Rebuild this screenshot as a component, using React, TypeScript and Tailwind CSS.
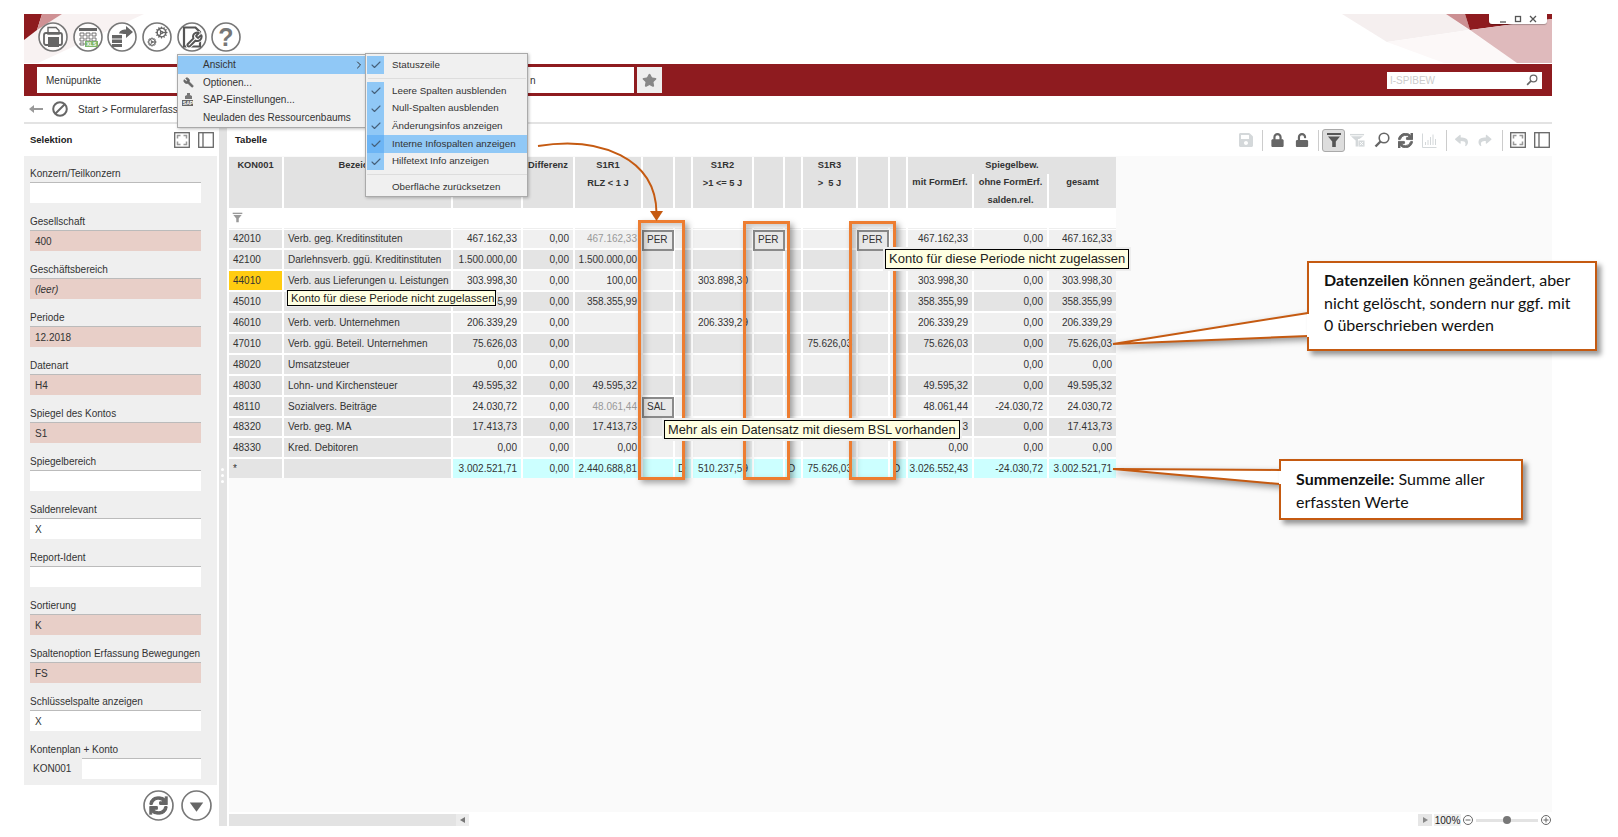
import { Check, ChevronRight, Cog, Star, Wrench } from "lucide-react";
import { FaLock, FaReply, FaSave, FaShare, FaSync, FaUnlock } from "react-icons/fa";
import clsx from "clsx";

type Row = {
  kon: string;
  name: string;
  val: string;
  diff: string;
  r1?: string;
  r2?: string;
  r3?: string;
  mit?: string;
  ohne: string;
  ges: string;
  r1Gray?: boolean;
  info?: string[];
  yellow?: boolean;
};

const ROWS: Row[] = [
  { kon: "42010", name: "Verb. geg. Kreditinstituten", val: "467.162,33", diff: "0,00", r1: "467.162,33", r1Gray: true, mit: "467.162,33", ohne: "0,00", ges: "467.162,33", info: ["PER", "PER", "PER"] },
  { kon: "42100", name: "Darlehnsverb. ggü. Kreditinstituten", val: "1.500.000,00", diff: "0,00", r1: "1.500.000,00", ohne: "", ges: "" },
  { kon: "44010", name: "Verb. aus Lieferungen u. Leistungen", val: "303.998,30", diff: "0,00", r1: "100,00", r2: "303.898,30", mit: "303.998,30", ohne: "0,00", ges: "303.998,30", yellow: true },
  { kon: "45010", name: "", val: "358.355,99", diff: "0,00", r1: "358.355,99", mit: "358.355,99", ohne: "0,00", ges: "358.355,99" },
  { kon: "46010", name: "Verb. verb. Unternehmen", val: "206.339,29", diff: "0,00", r2: "206.339,29", mit: "206.339,29", ohne: "0,00", ges: "206.339,29" },
  { kon: "47010", name: "Verb. ggü. Beteil. Unternehmen", val: "75.626,03", diff: "0,00", r3: "75.626,03", mit: "75.626,03", ohne: "0,00", ges: "75.626,03" },
  { kon: "48020", name: "Umsatzsteuer", val: "0,00", diff: "0,00", ohne: "0,00", ges: "0,00" },
  { kon: "48030", name: "Lohn- und Kirchensteuer", val: "49.595,32", diff: "0,00", r1: "49.595,32", mit: "49.595,32", ohne: "0,00", ges: "49.595,32" },
  { kon: "48110", name: "Sozialvers. Beiträge", val: "24.030,72", diff: "0,00", r1: "48.061,44", r1Gray: true, mit: "48.061,44", ohne: "-24.030,72", ges: "24.030,72", info: ["SAL"] },
  { kon: "48320", name: "Verb. geg. MA", val: "17.413,73", diff: "0,00", r1: "17.413,73", mit: "17.413,73", ohne: "0,00", ges: "17.413,73" },
  { kon: "48330", name: "Kred. Debitoren", val: "0,00", diff: "0,00", r1: "0,00", mit: "0,00", ohne: "0,00", ges: "0,00" },
];

const FIELDS: { label: string; value?: string; required?: boolean; italic?: boolean }[] = [
  { label: "Konzern/Teilkonzern" },
  { label: "Gesellschaft", value: "400", required: true },
  { label: "Geschäftsbereich", value: "(leer)", required: true, italic: true },
  { label: "Periode", value: "12.2018", required: true },
  { label: "Datenart", value: "H4", required: true },
  { label: "Spiegel des Kontos", value: "S1", required: true },
  { label: "Spiegelbereich" },
  { label: "Saldenrelevant", value: "X" },
  { label: "Report-Ident" },
  { label: "Sortierung", value: "K", required: true },
  { label: "Spaltenoption Erfassung Bewegungen", value: "FS", required: true },
  { label: "Schlüsselspalte anzeigen", value: "X" },
];

const GRID_COLS =
  "grid-cols-[53px_167px_68px_50px_66px_30px_16px_59px_29px_16px_53px_30px_16px_64px_73px_67px]";

function CircleIcon({ children, size = 30 }: { children: React.ReactNode; size?: number }) {
  return (
    <svg viewBox="0 0 30 30" width={size} height={size} className="shrink-0 text-[#666]">
      <circle cx="15" cy="15" r="14" fill="#fff" fillOpacity="0.75" stroke="#777" strokeWidth="1.6" />
      {children}
    </svg>
  );
}

function FilterGlyph({ className }: { className?: string }) {
  return (
    <svg viewBox="0 0 16 16" className={className} fill="currentColor">
      <path d="M1 1h14v2H1z" />
      <path d="M2 4.500h12l-4.200 5v5.500H6.200V9.500z" />
    </svg>
  );
}

function FilterClearGlyph() {
  return (
    <svg viewBox="0 0 16 16" className="ml-[5px] h-[15px] w-[15px] shrink-0" fill="#d4d8da">
      <path d="M0 1h15v1.500H0z" />
      <path d="M1 3.500h13l-4 3H8.500v8H6V8z" />
      <rect x="9" y="8" width="6.500" height="6.500" />
      <path d="M10.500 9.500l3.500 3.500M14 9.500L10.500 13" stroke="#fff" strokeWidth="1" />
    </svg>
  );
}

function ExpandIcon() {
  return (
    <svg viewBox="0 0 16 16" className="h-4 w-4 shrink-0" fill="none">
      <rect x="0.700" y="0.700" width="14.600" height="14.600" stroke="#666" strokeWidth="1.300" />
      <path d="M3.500 6.500v-3h3M9.500 3.500h3v3M12.500 9.500v3h-3M6.500 12.500h-3v-3" stroke="#999" strokeWidth="1.500" />
    </svg>
  );
}

function PanelIcon() {
  return (
    <svg viewBox="0 0 16 16" className="h-4 w-4 shrink-0" fill="none">
      <rect x="0.700" y="0.700" width="14.600" height="14.600" stroke="#666" strokeWidth="1.300" />
      <path d="M5 1v14" stroke="#666" strokeWidth="1.300" />
    </svg>
  );
}

function ToolSep({ className }: { className: string }) {
  return <span className={clsx("h-[21px] w-px shrink-0 bg-[#ccc]", className)} />;
}

function Field({ label, value, required, italic }: (typeof FIELDS)[number]) {
  return (
    <div className="mb-[10px]">
      <div className="flex h-[17px] items-center whitespace-nowrap text-[10px] text-[#333]">{label}</div>
      <div
        className={clsx(
          "flex h-[21px] items-center border-t border-[#bbb] pl-[5px] text-[10px] text-[#333]",
          required ? "bg-[#e8cfc8]" : "bg-white",
          italic && "italic",
        )}
      >
        {value}
      </div>
    </div>
  );
}

function Cell({
  children,
  className,
  right,
}: {
  children?: React.ReactNode;
  className: string;
  right?: boolean;
}) {
  return (
    <div
      className={clsx(
        "relative flex h-[18.9px] items-center whitespace-nowrap text-[10px] text-[#333]",
        right ? "justify-end pr-1" : "pl-1",
        className,
      )}
    >
      {children}
    </div>
  );
}

function InfoBox({ text }: { text: string }) {
  return (
    <div className="absolute left-[-1px] top-0 z-10 flex h-[21px] w-[32px] items-center border-2 border-[#8a8a8a] bg-[#e8e8e8] pb-px pl-[3px] text-[10px] text-[#333]">
      {text}
    </div>
  );
}

function HeadCell({ lines, className }: { lines: string[]; className?: string }) {
  return (
    <div
      className={clsx(
        "flex flex-col items-center bg-[#e2e2e2] text-[9.3px] font-bold leading-[17.5px] text-[#333]",
        className ?? "h-[51px]",
      )}
    >
      {lines.map((line) => (
        <span key={line} className="whitespace-pre">
          {line}
        </span>
      ))}
    </div>
  );
}

function Table() {
  return (
    <div className={clsx("grid w-fit gap-[2px] bg-white", GRID_COLS)}>
      <HeadCell lines={["KON001"]} />
      <HeadCell lines={["Bezeichnung"]} />
      <HeadCell lines={[]} />
      <HeadCell lines={["Differenz"]} />
      <HeadCell lines={["S1R1", "RLZ < 1 J"]} />
      <HeadCell lines={[]} />
      <HeadCell lines={[]} />
      <HeadCell lines={["S1R2", ">1 <= 5 J"]} />
      <HeadCell lines={[]} />
      <HeadCell lines={[]} />
      <HeadCell lines={["S1R3", ">  5 J"]} />
      <HeadCell lines={[]} />
      <HeadCell lines={[]} />
      {/* Spiegelbew. spans its three sub columns */}
      <div className="col-span-3 flex h-[51px] flex-col">
        <div className="h-[17px] bg-[#e2e2e2] text-center text-[9.3px] font-bold leading-[17.5px] text-[#333]">
          Spiegelbew.
        </div>
        <div className="grid flex-1 grid-cols-[64px_73px_67px] gap-x-[2px]">
          <HeadCell lines={["mit FormErf."]} className="h-[34px]" />
          <HeadCell lines={["ohne FormErf.", "salden.rel."]} className="h-[34px]" />
          <HeadCell lines={["gesamt"]} className="h-[34px]" />
        </div>
      </div>

      {/* filter row */}
      {Array.from({ length: 16 }, (_, i) => (
        <div key={i} className="h-[17.5px] bg-white shadow-[0_1px_0_#eee]">
          {i === 0 && <FilterGlyph className="ml-[3px] mt-[2px] h-[11px] w-[11px] text-[#999]" />}
        </div>
      ))}

      {ROWS.map((r, idx) => {
        const bg = idx % 2 === 0 ? "bg-[#f0f0f0]" : "bg-[#e4e4e4]";
        return [
          <Cell key={`${r.kon}-k`} className={r.yellow ? "bg-[#ffcc11]" : "bg-[#e4e4e4]"}>{r.kon}</Cell>,
          <Cell key={`${r.kon}-n`} className="bg-[#e4e4e4]">{r.name}</Cell>,
          <Cell key={`${r.kon}-v`} right className={bg}>{r.val}</Cell>,
          <Cell key={`${r.kon}-d`} right className={bg}>{r.diff}</Cell>,
          <Cell key={`${r.kon}-1`} right className={clsx(bg, r.r1Gray && "!text-[#999]")}>{r.r1}</Cell>,
          <Cell key={`${r.kon}-i1`} className={bg}>{r.info?.[0] && <InfoBox text={r.info[0]} />}</Cell>,
          <Cell key={`${r.kon}-s1`} className={bg} />,
          <Cell key={`${r.kon}-2`} right className={bg}>{r.r2}</Cell>,
          <Cell key={`${r.kon}-i2`} className={bg}>{r.info?.[1] && <InfoBox text={r.info[1]} />}</Cell>,
          <Cell key={`${r.kon}-s2`} className={bg} />,
          <Cell key={`${r.kon}-3`} right className={bg}>{r.r3}</Cell>,
          <Cell key={`${r.kon}-i3`} className={bg}>{r.info?.[2] && <InfoBox text={r.info[2]} />}</Cell>,
          <Cell key={`${r.kon}-s3`} className={bg} />,
          <Cell key={`${r.kon}-m`} right className={bg}>{r.mit}</Cell>,
          <Cell key={`${r.kon}-o`} right className={bg}>{r.ohne}</Cell>,
          <Cell key={`${r.kon}-g`} right className={bg}>{r.ges}</Cell>,
        ];
      })}

      {/* Summenzeile */}
      <Cell className="bg-[#e4e4e4]">*</Cell>
      <Cell className="bg-[#e4e4e4]" />
      <Cell right className="bg-[#ccffff]">3.002.521,71</Cell>
      <Cell right className="bg-[#ccffff]">0,00</Cell>
      <Cell right className="bg-[#ccffff]">2.440.688,81</Cell>
      <Cell className="bg-[#ccffff]" />
      <Cell className="bg-[#ccffff] !pl-[3px]">D</Cell>
      <Cell right className="bg-[#ccffff]">510.237,59</Cell>
      <Cell className="bg-[#ccffff]" />
      <Cell className="bg-[#ccffff] !pl-[3px]">D</Cell>
      <Cell right className="bg-[#ccffff]">75.626,03</Cell>
      <Cell className="bg-[#ccffff]" />
      <Cell className="bg-[#ccffff] !pl-[3px]">D</Cell>
      <Cell right className="bg-[#ccffff]">3.026.552,43</Cell>
      <Cell right className="bg-[#ccffff]">-24.030,72</Cell>
      <Cell right className="bg-[#ccffff]">3.002.521,71</Cell>
    </div>
  );
}

function MenuCheck({ dark }: { dark?: boolean }) {
  return (
    <span className={clsx("flex h-[17.7px] w-[17px] shrink-0 items-center justify-center", dark ? "bg-[#6db5f5]" : "bg-[#90c8f6]")}>
      <Check className="h-3 w-3 text-[#46607a]" strokeWidth={2.2} />
    </span>
  );
}

function SubItem({ label, dark }: { label: string; dark?: boolean }) {
  return (
    <div className={clsx("flex h-[17.7px] items-center text-[9.8px] text-[#333]", dark && "bg-[#90c8f6]")}>
      <MenuCheck dark={dark} />
      <span className="ml-2">{label}</span>
    </div>
  );
}

function Menus() {
  return (
    <>
      <div className="absolute left-[177px] top-[54px] z-30 h-[74px] w-[189px] border border-[#aaa] bg-[#f0f0f0] pt-px text-[10px] text-[#333] shadow-[1px_1px_3px_rgba(0,0,0,0.25)]">
        <div className="flex h-[17.500px] items-center bg-[#90c8f6] pl-[25px]">
          Ansicht
          <ChevronRight className="ml-auto h-3 w-3" />
        </div>
        <div className="relative flex h-[17.500px] items-center pl-[25px]">
          <Wrench className="absolute left-[5px] h-[11px] w-[11px] -scale-x-100 fill-[#666] text-[#666]" />
          Optionen...
        </div>
        <div className="relative flex h-[17.500px] items-center pl-[25px]">
          <svg viewBox="0 0 13 13" className="absolute left-[4px] h-[13px] w-[13px]">
            <path d="M5 0h3v2l2 1v3H3V3l2-1z" fill="#777" />
            <rect x="0" y="7" width="11" height="6" fill="#666" />
            <text x="0.800" y="12" fontSize="5" fontWeight="700" fill="#fff">SAP</text>
          </svg>
          SAP-Einstellungen...
        </div>
        <div className="flex h-[17.500px] items-center pl-[25px]">Neuladen des Ressourcenbaums</div>
      </div>
      <div className="absolute left-[365px] top-[53px] z-30 h-[144px] w-[163px] border border-[#aaa] bg-[#f0f0f0] pl-px pt-[2px] shadow-[1px_1px_3px_rgba(0,0,0,0.25)]">
        <div className="flex h-[18px] flex-col justify-center">
          <SubItem label="Statuszeile" />
        </div>
        <div className="my-[3.500px] ml-px mr-px h-px bg-[#ddd]" />
        <SubItem label="Leere Spalten ausblenden" />
        <SubItem label="Null-Spalten ausblenden" />
        <SubItem label="Änderungsinfos anzeigen" />
        <SubItem label="Interne Infospalten anzeigen" dark />
        <SubItem label="Hilfetext Info anzeigen" />
        <div className="my-[3.500px] h-px bg-[#ddd]" />
        <div className="flex h-[18px] items-center pl-[25px] text-[9.8px] text-[#333]">Oberfläche zurücksetzen</div>
      </div>
    </>
  );
}

function Annotations() {
  return (
    <>
      {/* orange frames */}
      <div className="absolute left-[638px] top-[220px] z-20 h-[260px] w-[47px] border-[3px] border-[#ed7d31] shadow-[3px_3px_6px_rgba(0,0,0,0.35),inset_4px_3px_6px_rgba(0,0,0,0.22)]" />
      <div className="absolute left-[743px] top-[221px] z-20 h-[259px] w-[47px] border-[3px] border-[#ed7d31] shadow-[3px_3px_6px_rgba(0,0,0,0.35),inset_4px_3px_6px_rgba(0,0,0,0.22)]" />
      <div className="absolute left-[849px] top-[221px] z-20 h-[259px] w-[47px] border-[3px] border-[#ed7d31] shadow-[3px_3px_6px_rgba(0,0,0,0.35),inset_4px_3px_6px_rgba(0,0,0,0.22)]" />

      {/* tooltips */}
      <div className="absolute left-[287px] top-[290px] z-20 flex h-[16px] w-[209px] items-center whitespace-nowrap border border-black bg-[#ffffe1] pl-[3px] text-[11.2px] text-[#222] shadow-[0_0_0_1px_#eee]">
        Konto für diese Periode nicht zugelassen
      </div>
      <div className="absolute left-[885px] top-[249px] z-20 flex h-[20px] w-[244px] items-center whitespace-nowrap border border-black bg-[#ffffe1] pl-[3px] text-[13px] text-[#222] shadow-[0_0_0_2px_#eee]">
        Konto für diese Periode nicht zugelassen
      </div>
      <div className="absolute left-[664px] top-[420px] z-20 flex h-[19px] w-[296px] items-center whitespace-nowrap border border-black bg-[#ffffe1] pl-[3px] text-[12.8px] text-[#222] shadow-[0_0_0_2px_#eee]">
        Mehr als ein Datensatz mit diesem BSL vorhanden
      </div>

      {/* curved arrow + callout pointers */}
      <svg className="pointer-events-none absolute left-0 top-0 z-20" width="1618" height="837" fill="none">
        <path d="M538 146C600 136 656 158 656.500 213" stroke="#c55a11" strokeWidth="2" />
        <path d="M650 211h13l-6.500 10z" fill="#c55a11" />
        <g className="drop-shadow-[3px_3px_3px_rgba(0,0,0,0.4)]">
          <path d="M1309 313L1113 344L1309 336z" fill="#fff" />
          <path d="M1308 313L1113 344L1308 336" stroke="#c55a11" strokeWidth="2" />
          <path d="M1281 470L1113 469L1281 484z" fill="#fff" />
          <path d="M1280 470L1113 469L1280 484" stroke="#c55a11" strokeWidth="2" />
        </g>
      </svg>

      <div className="absolute left-[1307px] top-[261px] z-20 h-[90px] w-[290px] border-2 border-[#c55a11] bg-white pl-[15px] pt-[6px] font-['Lato',sans-serif] text-[16px] leading-[22.500px] text-[#111] shadow-[4px_4px_5px_rgba(0,0,0,0.4)]">
        <div className="absolute left-[-2px] top-[51px] h-[23px] w-[2px] bg-white" />
        <b>Datenzeilen</b> können geändert, aber
        <br />
        nicht gelöscht, sondern nur ggf. mit
        <br />0 überschrieben werden
      </div>
      <div className="absolute left-[1279px] top-[459px] z-20 h-[61px] w-[244px] border-2 border-[#c55a11] bg-white pl-[15px] pt-[7px] font-['Lato',sans-serif] text-[16px] leading-[22.500px] text-[#111] shadow-[4px_4px_5px_rgba(0,0,0,0.4)]">
        <div className="absolute left-[-2px] top-[10px] h-[13px] w-[2px] bg-white" />
        <b>Summenzeile:</b> Summe aller
        <br />
        erfassten Werte
      </div>
    </>
  );
}

export default function App() {
  return (
    <div className="relative h-[837px] w-[1618px] overflow-hidden bg-white pl-[24px] pt-[14px] font-['Liberation_Sans',sans-serif]">
      <div className="flex w-[1528px] flex-col">
        {/* title strip with the facetted background */}
        <div className="relative h-[50px]">
          <svg className="absolute inset-0" width="1528" height="49" viewBox="0 0 1528 49">
            <path d="M38 0h82L14 49H0V26l13-10z" fill="#f8f2f2" />
            <path d="M0 0h18l-5 16L0 26z" fill="#8e1b1f" />
            <path d="M18 0h20L13 16z" fill="#cf9194" />
            <path d="M1318 0h104l23 16-82 12z" fill="#f5efef" />
            <path d="M1363 28l82-12 48 33h-73z" fill="#fcf8f8" />
            <path d="M1422 0h19l5 16z" fill="#cc9093" />
            <path d="M1441 0h87v5l-82 11z" fill="#8e1b1f" />
            <path d="M1446 16l82-11v44h-35z" fill="#dfbabc" />
          </svg>
          <div className="relative flex items-center gap-[4.700px] pl-[14px] pt-[8px]">
            <CircleIcon>
              <path d="M10 5.500h8l3 3V12H10z" fill="none" stroke="#666" strokeWidth="1.400" />
              <rect x="6" y="11" width="18" height="12" rx="2" fill="none" stroke="#666" strokeWidth="1.800" />
              <rect x="10" y="15" width="11" height="10" fill="#666" />
            </CircleIcon>
            <CircleIcon>
              <rect x="6" y="6" width="18" height="3" fill="#666" />
              <path d="M7 11h4v3H7zM13 11h4v3h-4zM19 11h4v3h-4zM7 16h4v3H7zM13 16h4v3h-4zM19 16h4v3h-4z" fill="none" stroke="#666" strokeWidth="0.900" />
              <path d="M7 21h4v2H7z" fill="none" stroke="#666" strokeWidth="0.900" />
              <rect x="12" y="19" width="13" height="6" fill="#7fb66a" />
              <text x="13.500" y="24" fontSize="5" fontWeight="700" fill="#fff">XLS</text>
            </CircleIcon>
            <CircleIcon>
              <path d="M5 13h10v3.500H5zM5 17.500h10V21H5zM5 22h10v3H5z" fill="#666" />
              <path d="M12 11.500c1-3 3-4 7-4V4l7 6-7 6v-4c-3 0-5-.5-7-.5z" fill="#666" />
            </CircleIcon>
            <CircleIcon>
              <Cog x={13} y={4} width={13} height={13} strokeWidth={2.400} />
              <Cog x={5} y={15} width={10} height={10} strokeWidth={2.400} />
            </CircleIcon>
            <CircleIcon>
              <path d="M7 5.500h11.500l4.500 4.500v14.500H7z" fill="none" stroke="#555" strokeWidth="2.200" />
              <Wrench x={9} y={9} width={17} height={17} strokeWidth={5} stroke="#fff" />
              <Wrench x={9} y={9} width={17} height={17} strokeWidth={2.800} stroke="#555" />
            </CircleIcon>
            <CircleIcon>
              <text x="15" y="24" textAnchor="middle" fontSize="25" fontWeight="700" fill="#777">?</text>
            </CircleIcon>
          </div>
          {/* window buttons */}
          <div className="absolute right-[5px] top-0 flex h-[10px] w-[58px] items-center justify-around rounded-b-[3px] bg-white px-[6px] shadow-[0_1px_1px_rgba(0,0,0,0.25)]">
            <svg viewBox="0 0 8 8" className="h-2 w-2" fill="none" stroke="#555" strokeWidth="1.300"><path d="M1 7h6" /></svg>
            <svg viewBox="0 0 8 8" className="h-2 w-2" fill="none" stroke="#555" strokeWidth="1.300"><rect x="1.500" y="1.500" width="5" height="5" /></svg>
            <svg viewBox="0 0 8 8" className="h-2 w-2" fill="none" stroke="#555" strokeWidth="1.300"><path d="M1 1l6 6M7 1l-6 6" /></svg>
          </div>
        </div>

        {/* red navigation band */}
        <div className="flex h-[32px] items-center bg-[#8e1b1f] pl-[13px]">
          <div className="flex h-[26px] w-[597px] items-center bg-white pl-[9px] text-[10px] text-[#333]">
            Menüpunkte
            <span className="ml-[429px]">n</span>
          </div>
          <div className="ml-[3px] flex h-[26px] w-[25px] items-center justify-center bg-[#eee]">
            <Star className="h-[15px] w-[15px] fill-[#888] text-[#888]" />
          </div>
          <div className="ml-auto mr-[10px] flex h-[17px] w-[155px] items-center justify-between bg-white pl-[3px] pr-[4px] text-[10px] text-[#ccc]">
            I-SPIBEW
            <svg viewBox="0 0 16 16" className="h-3 w-3" fill="none" stroke="#666" strokeWidth="1.600">
              <circle cx="10" cy="6" r="4.500" />
              <path d="M6.800 9.200L1.500 14.500" strokeWidth="2.200" />
            </svg>
          </div>
        </div>

        {/* breadcrumb */}
        <div className="flex h-[26px] items-center text-[10px] text-[#333]">
          <svg viewBox="0 0 14 10" className="ml-[5px] h-[10px] w-[14px]" fill="#999">
            <path d="M0 5l5-4v3h9v2H5v3z" />
          </svg>
          <svg viewBox="0 0 16 16" className="ml-[9px] h-4 w-4" fill="none" stroke="#666" strokeWidth="2">
            <circle cx="8" cy="8" r="6.800" />
            <path d="M3.500 12.500l9-9" />
          </svg>
          <span className="ml-[10px]">Start &gt; Formularerfassung</span>
        </div>
        <div className="h-[2px] bg-[#e3e3e3]" />

        <div className="flex h-[702px]">
          {/* Selektion */}
          <div className="flex w-[193px] shrink-0 flex-col">
            <div className="flex h-[32px] items-center gap-2 pl-[6px] pr-[3px]">
              <span className="mr-auto text-[9.5px] font-bold text-[#222]">Selektion</span>
              <ExpandIcon />
              <PanelIcon />
            </div>
            <div className="h-[629px] bg-[#efefef] pl-[6px] pr-[16px] pt-[9px]">
              {FIELDS.map((f) => (
                <Field key={f.label} {...f} />
              ))}
              <div className="flex h-[17px] items-center text-[10px] text-[#333]">Kontenplan + Konto</div>
              <div className="flex h-[21px] items-center text-[10px] text-[#333]">
                <span className="w-[52px] pl-[3px]">KON001</span>
                <div className="h-full flex-1 border-t border-[#bbb] bg-white" />
              </div>
            </div>
            <div className="flex justify-end gap-[7px] pr-[5px] pt-[5px]">
              <CircleIcon size={31}>
                <foreignObject x="6" y="6" width="18" height="18">
                  <FaSync className="h-[18px] w-[18px] text-[#666]" stroke="currentColor" strokeWidth={30} />
                </foreignObject>
              </CircleIcon>
              <CircleIcon size={31}>
                <path d="M8.500 12h13L15 21z" fill="#666" />
              </CircleIcon>
            </div>
          </div>

          {/* splitter */}
          <div className="relative ml-[2px] w-2 shrink-0 bg-[#e3e3e3]">
            <div className="absolute left-[2px] top-[344px] flex flex-col gap-[3px]">
              <span className="h-[3px] w-[3px] rounded-full bg-white" />
              <span className="h-[3px] w-[3px] rounded-full bg-white" />
              <span className="h-[3px] w-[3px] rounded-full bg-white" />
            </div>
          </div>

          {/* Tabelle */}
          <div className="ml-[2px] flex min-w-0 flex-1 flex-col">
            <div className="flex h-[32px] items-center pl-[6px] pr-[2px]">
              <span className="mr-auto text-[9.5px] font-bold text-[#222]">Tabelle</span>
              <FaSave className="h-4 w-4 shrink-0 text-[#d4d8da]" />
              <ToolSep className="ml-2" />
              <FaLock className="ml-2 h-[14px] w-[13px] shrink-0 text-[#666]" />
              <FaUnlock className="ml-[10px] h-[14px] w-4 shrink-0 text-[#666]" />
              <ToolSep className="ml-2" />
              <div className="ml-[3px] flex h-[23px] w-[23px] shrink-0 items-center justify-center rounded-[3px] border border-[#aaa] bg-[#ddd]">
                <FilterGlyph className="h-[16px] w-[16px] text-[#555]" />
              </div>
              <FilterClearGlyph />
              <svg viewBox="0 0 16 16" className="ml-[9px] h-4 w-4 shrink-0" fill="none" stroke="#666" strokeWidth="1.600">
                <circle cx="10" cy="6" r="4.800" />
                <path d="M6.500 9.500L1.500 14.500" strokeWidth="2.400" />
              </svg>
              <FaSync className="ml-2 h-[15px] w-[15px] shrink-0 text-[#666]" stroke="currentColor" strokeWidth={30} />
              <svg viewBox="0 0 15 15" className="ml-[9px] h-[15px] w-[15px] shrink-0" fill="none" stroke="#d4d8da">
                <path d="M.500.500v14h14M3.500 12V9M6 12V7M8.500 12V4M11 12V1.500M13.500 12V6" />
              </svg>
              <ToolSep className="ml-[9px]" />
              <FaReply className="ml-2 h-[13px] w-[13px] shrink-0 text-[#d4d8da]" />
              <FaShare className="ml-[10px] h-[13px] w-[14px] shrink-0 text-[#d4d8da]" />
              <ToolSep className="ml-[10px]" />
              <span className="ml-[7px]"><ExpandIcon /></span>
              <span className="ml-2"><PanelIcon /></span>
            </div>
            <div className="flex-1 bg-[#fafafa] pt-px">
              <Table />
            </div>
            <div className="flex h-[14px] shrink-0 items-end">
              <div className="flex h-[12px] w-[240px] justify-end bg-[#e3e3e3]">
                <div className="flex w-[13px] items-center justify-center bg-[#ececec]">
                  <svg viewBox="0 0 6 6" className="h-[6px] w-[6px]" fill="#777"><path d="M5 0v6L0 3z" /></svg>
                </div>
              </div>
              <div className="ml-auto flex h-[12px] items-center pr-[1px]">
                <div className="flex h-[12px] w-[14px] items-center justify-center bg-[#e6e6e6]">
                  <svg viewBox="0 0 6 6" className="h-[6px] w-[6px]" fill="#888"><path d="M1 0v6l5-3z" /></svg>
                </div>
                <div className="ml-[2px] flex h-[12px] w-[27px] items-center justify-center bg-[#efefef] text-[10px] text-[#222]">100%</div>
                <svg viewBox="0 0 10 10" className="ml-[2px] h-[10px] w-[10px]" fill="none" stroke="#666"><circle cx="5" cy="5" r="4.500" /><path d="M2.500 5h5" /></svg>
                <div className="relative mx-[3px] h-[3px] w-[62px] bg-[#e3e3e3]">
                  <span className="absolute left-[27px] top-[-3px] h-[8px] w-[8px] rounded-full bg-[#777]" />
                </div>
                <svg viewBox="0 0 10 10" className="h-[10px] w-[10px]" fill="none" stroke="#666"><circle cx="5" cy="5" r="4.500" /><path d="M2.500 5h5M5 2.500v5" /></svg>
              </div>
            </div>
          </div>
        </div>
      </div>

      <Annotations />
      <Menus />
    </div>
  );
}
